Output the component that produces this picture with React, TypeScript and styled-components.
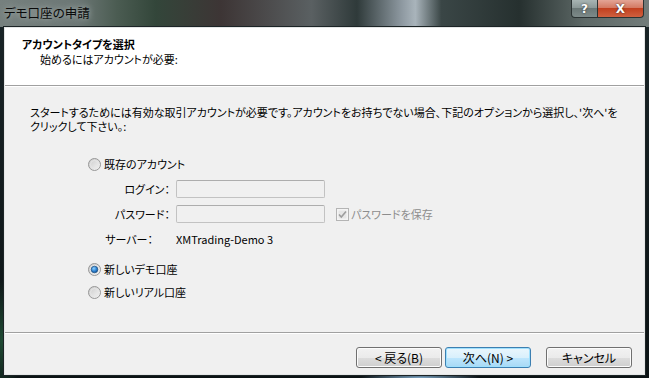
import React, { useId } from "react";
import styled, { createGlobalStyle } from "styled-components";

const GlobalStyle = createGlobalStyle`
  html, body {
    margin: 0;
    padding: 0;
    background: #0d1517;
  }
  body {
    font-family: "Noto Sans CJK JP", "Noto Sans", sans-serif;
    font-feature-settings: "palt";
  }
`;

const Radio: React.FC<{ checked?: boolean }> = ({ checked }) => {
  const id = useId().replace(/:/g, "");
  return (
    <svg width="13" height="13" viewBox="0 0 13 13">
      <defs>
        <linearGradient id={`rg${id}`} x1="0" y1="0" x2="1" y2="1">
          <stop offset="0" stopColor="#c9c9c9" />
          <stop offset="1" stopColor="#f7f7f7" />
        </linearGradient>
        <radialGradient id={`rb${id}`} cx="0.4" cy="0.35" r="0.7">
          <stop offset="0" stopColor="#8fd2ff" />
          <stop offset="0.6" stopColor="#2a7fd0" />
          <stop offset="1" stopColor="#14508f" />
        </radialGradient>
      </defs>
      <circle cx="6.5" cy="6.5" r="6" fill={`url(#rg${id})`} stroke="#979797" />
      <circle cx="6.5" cy="6.5" r="4" fill="none" stroke="#e6e6e6" />
      {checked && (
        <circle cx="6.5" cy="6.5" r="3.3" fill={`url(#rb${id})`} stroke="#1d4f80" strokeWidth="0.7" />
      )}
    </svg>
  );
};

const Checkbox: React.FC = () => (
  <svg width="13" height="13" viewBox="0 0 13 13">
    <rect x="0.5" y="0.5" width="12" height="12" fill="#f4f4f4" stroke="#b4b4b4" />
    <rect x="2.5" y="2.5" width="8" height="8" fill="#e6e6e6" />
    <path d="M3 6.5 L5.3 9 L10 3.5" fill="none" stroke="#9d9d9d" strokeWidth="1.6" />
  </svg>
);

export default function App() {
  return (
    <>
      <GlobalStyle />
      <Window>
        <TitleBar>
          <Title>デモ口座の申請</Title>
          <Caption>
            <HelpButton>?</HelpButton>
            <CloseButton>X</CloseButton>
          </Caption>
        </TitleBar>
        <Client>
          <Header>
            <HeaderTitle>アカウントタイプを選択</HeaderTitle>
            <HeaderSub>始めるにはアカウントが必要:</HeaderSub>
          </Header>
          <Body>
            <Description>
              <div>
                スタートするためには有効な取引アカウントが必要です。アカウントをお持ちでない場合、下記のオプションから選択し、'次へ'を
              </div>
              <div>クリックして下さい。:</div>
            </Description>
            <Options>
              <RadioRow>
                <Radio />
                <span>既存のアカウント</span>
              </RadioRow>
              <FieldGrid>
                <FieldLabel>ログイン：</FieldLabel>
                <TextBox />
                <span />
                <FieldLabel>パスワード：</FieldLabel>
                <TextBox />
                <CheckRow>
                  <Checkbox />
                  <span>パスワードを保存</span>
                </CheckRow>
                <FieldLabel $pad={17}>サーバー：</FieldLabel>
                <ServerValue>XMTrading-Demo 3</ServerValue>
                <span />
              </FieldGrid>
              <RadioRow $top={15}>
                <Radio checked />
                <span>新しいデモ口座</span>
              </RadioRow>
              <RadioRow $top={7}>
                <Radio />
                <span>新しいリアル口座</span>
              </RadioRow>
            </Options>
          </Body>
          <Footer>
            <Button>&lt; 戻る(B)</Button>
            <Button $primary $gap={3}>次へ(N) &gt;</Button>
            <Button $gap={15}>キャンセル</Button>
          </Footer>
        </Client>
      </Window>
    </>
  );
}

const Window = styled.div`
  width: 649px;
  height: 378px;
  box-sizing: border-box;
  display: flex;
  flex-direction: column;
  padding: 0 4px 3px;
  background:
    linear-gradient(
        90deg,
        #76807e 0%,
        #6c7775 12%,
        #4b5c52 18%,
        #33463a 24%,
        #3d3535 34%,
        #5a6062 48%,
        #2f3a3a 55%,
        #8f9aa2 62%,
        #a9b4bb 64%,
        #3a4646 68%,
        #26302f 80%,
        #5d6866 90%,
        #727c7a 100%
      )
      top / 100% 27px no-repeat,
    radial-gradient(ellipse 20px 60px at 2px 340px, #1f4a33, transparent),
    radial-gradient(ellipse 60px 6px at 420px 378px, #7fa8c8, transparent),
    linear-gradient(180deg, #1a2528, #0b1214);
`;

const TitleBar = styled.div`
  height: 27px;
  display: flex;
  justify-content: space-between;
  align-items: flex-start;
`;

const Title = styled.div`
  padding-top: 5px;
  font-size: 12.5px;
  line-height: 16px;
  color: #0a0a0a;
  text-shadow: 0 0 6px rgba(220, 230, 230, 0.7);
`;

const Caption = styled.div`
  display: flex;
  margin-right: 1px;
`;

const CaptionButton = styled.div`
  height: 18px;
  display: flex;
  align-items: center;
  justify-content: center;
  font-family: "DejaVu Sans", sans-serif;
  font-weight: bold;
  font-size: 12px;
  color: #fff;
  text-shadow: 0 0 2px #222;
  border: 1px solid #2b3333;
  border-top: none;
  box-sizing: border-box;
`;

const HelpButton = styled(CaptionButton)`
  width: 27px;
  border-radius: 0 0 0 4px;
  background: linear-gradient(180deg, #a8b4b3 0%, #8c9998 45%, #6b7877 50%, #7d8a89 100%);
`;

const CloseButton = styled(CaptionButton)`
  width: 46px;
  border-left: none;
  border-radius: 0 0 4px 0;
  background: linear-gradient(180deg, #e3a495 0%, #d47a63 45%, #c2401f 50%, #d0603f 100%);
`;

const Client = styled.div`
  flex: 1;
  display: flex;
  flex-direction: column;
  background: #f0f0f0;
  border: 1px solid #e4e6e6;
  box-shadow: 0 0 0 1px #1c2426;
  font-size: 11px;
  line-height: 13px;
  color: #000;
`;

const Header = styled.div`
  height: 58px;
  box-sizing: border-box;
  background: #fff;
  border-bottom: 1px solid #a0a0a0;
  padding: 9px 0 0 17px;
  line-height: 14px;
`;

const HeaderTitle = styled.div`
  font-weight: bold;
`;

const HeaderSub = styled.div`
  margin-top: 1px;
  padding-left: 18px;
`;

const Body = styled.div`
  flex: 1;
  border-top: 1px solid #fff;
  padding: 18px 0 0 25px;
`;

const Description = styled.div`
  white-space: nowrap;
  line-height: 14px;
`;

const Options = styled.div`
  margin: 23px 0 0 58px;
  display: flex;
  flex-direction: column;
`;

const RadioRow = styled.div<{ $top?: number }>`
  height: 16px;
  margin-top: ${(p) => p.$top ?? 0}px;
  display: flex;
  align-items: center;
  gap: 3px;
`;

const FieldGrid = styled.div`
  margin: 8px 0 0 15px;
  display: grid;
  grid-template-columns: 67px 149px auto;
  grid-template-rows: 18px 18px 16px;
  column-gap: 6px;
  row-gap: 7px;
  align-items: center;

  & > :nth-child(7),
  & > :nth-child(8) {
    margin-top: 3px;
  }
`;

const FieldLabel = styled.div<{ $pad?: number }>`
  justify-self: end;
  padding-right: ${(p) => p.$pad ?? 0}px;
  white-space: nowrap;
`;

const TextBox = styled.div`
  height: 18px;
  box-sizing: border-box;
  border: 1px solid #c2c2c2;
  border-top-color: #adadad;
  border-radius: 2px;
  background: #f0f0f0;
`;

const ServerValue = styled.div`
  white-space: nowrap;
`;

const CheckRow = styled.div`
  margin-left: 5px;
  display: flex;
  align-items: center;
  gap: 2px;
  color: #8d8d8d;
  white-space: nowrap;
`;

const Footer = styled.div`
  height: 42px;
  box-sizing: border-box;
  border-top: 1px solid #a0a0a0;
  box-shadow: inset 0 1px 0 #fff;
  padding: 14px 12px 0 0;
  display: flex;
  justify-content: flex-end;
  align-items: flex-start;
`;

const Button = styled.div<{ $primary?: boolean; $gap?: number }>`
  width: 86px;
  height: 21px;
  box-sizing: border-box;
  margin-left: ${(p) => p.$gap ?? 0}px;
  display: flex;
  align-items: center;
  justify-content: center;
  border-radius: 3px;
  border: 1px solid ${(p) => (p.$primary ? "#3c7fb1" : "#707070")};
  box-shadow: inset 0 0 0 1px ${(p) => (p.$primary ? "#9fe0fd" : "#fcfcfc")};
  background: ${(p) =>
    p.$primary
      ? "linear-gradient(180deg, #eaf6fd 0%, #d9f0fc 50%, #bee6fd 51%, #a7d9f5 100%)"
      : "linear-gradient(180deg, #f2f2f2 0%, #ebebeb 50%, #dddddd 51%, #cfcfcf 100%)"};
  font-size: 12px;
  color: #000;
`;
